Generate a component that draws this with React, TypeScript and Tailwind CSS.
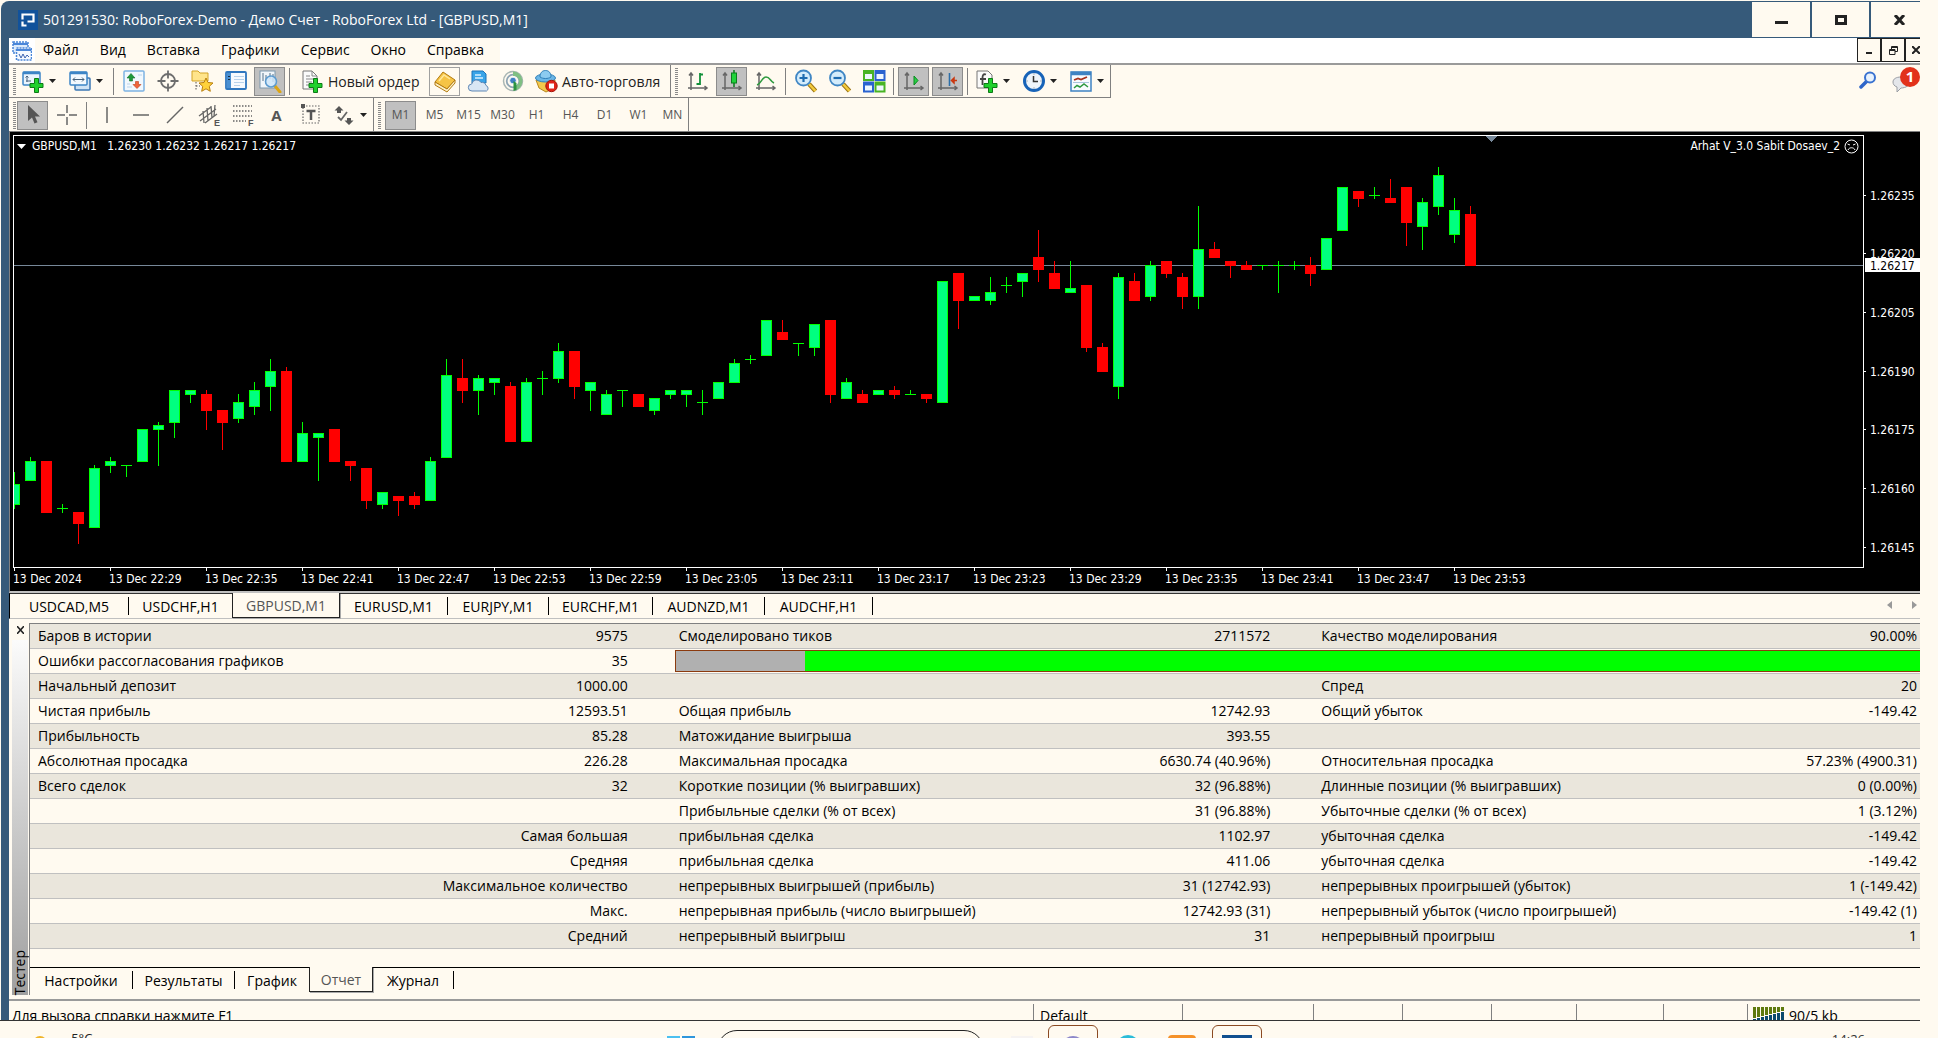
import React from 'react';

type IconProps = { children: React.ReactNode; size?: number };

function Ico({ children, size = 24 }: IconProps) {
  return (
    <svg width={size} height={size} viewBox="0 0 24 24" fill="none" aria-hidden="true" className="block shrink-0">
      {children}
    </svg>
  );
}

/* ---------- toolbar icons ---------- */

const PLUS = 'M13.500 9.500h4v5H22v4h-4.500v5h-4v-5H9v-4h4.500z';

const NewChart = () => (
  <Ico>
    <rect x="2" y="3" width="17" height="13" rx="1" fill="#eaf4fd" stroke="#3d85c6" strokeWidth="1.500" />
    <path d="M2 4h17" stroke="#3d85c6" strokeWidth="2.500" />
    <path d="M6 7v6M4.500 8.500 6 7l1.500 1.500M10 12H5" stroke="#48637c" />
    <path d={PLUS} fill="#1fd02c" stroke="#0d7a16" />
  </Ico>
);
const Profiles = () => (
  <Ico>
    <rect x="7" y="9" width="15" height="12" rx="1" fill="#cfe3f5" stroke="#3d78b4" strokeWidth="1.500" />
    <rect x="2" y="3" width="17" height="13" rx="1" fill="#f3f9fe" stroke="#3d85c6" strokeWidth="1.500" />
    <path d="M2 4h17" stroke="#3d85c6" strokeWidth="2.500" />
    <path d="M5 10.500h11M7 8.500l-2 2 2 2M14 8.500l2 2-2 2" stroke="#48637c" />
  </Ico>
);
const MarketWatch = () => (
  <Ico>
    <rect x="2" y="2" width="20" height="20" rx="1" fill="#f2f8fd" stroke="#7db3e2" strokeWidth="1.500" />
    <path d="M5 18h5M16 6h4M5 15h3" stroke="#b9d3ea" />
    <path d="M9 4.500 13 9h-2.500v3h-3V9H5z" fill="#1f9a3a" stroke="#147028" strokeWidth=".6" />
    <path d="m15 19.500 4-4h-2.500v-3h-3v3H11z" fill="#f0653a" stroke="#c03d17" strokeWidth=".6" />
  </Ico>
);
const Crosshair = () => (
  <Ico>
    <circle cx="12" cy="12" r="7" stroke="#6d6d6d" strokeWidth="1.800" />
    <path d="M12 1.500v8M12 14.500v8M1.500 12h8M14.500 12h8" stroke="#6d6d6d" strokeWidth="1.800" />
  </Ico>
);
const Navigator = () => (
  <Ico>
    <path d="M2 2h6l2 2h8v8H2z" fill="#ffe48a" stroke="#d3a326" />
    <path d="M6 13v9M6 17h4" stroke="#555" strokeDasharray="1.500 1.500" />
    <path d="m16 9 2 4.500 5 .5-3.700 3.300 1 5L16 19.800l-4.300 2.500 1-5L9 14l5-.5z" fill="#ffd23a" stroke="#b9800f" />
  </Ico>
);
const Terminal = () => (
  <Ico>
    <rect x="2" y="3" width="20" height="17" rx="1" fill="#f6fafe" stroke="#2f77bf" strokeWidth="1.800" />
    <rect x="3" y="4" width="4" height="15" fill="#4a90d2" />
    <path d="M10 7.500h10M10 10.500h10M10 13.500h10M10 16.500h6" stroke="#b8d2ea" />
    <path d="M4 7.500h2M4 10.500h2" stroke="#1c2c3c" />
  </Ico>
);
const Tester = () => (
  <Ico>
    <rect x="2" y="2" width="15" height="17" fill="#f1f6fa" stroke="#7d98ad" />
    <path d="M5 4v8M8 6v9M12 4v6M15 5v8" stroke="#54728a" />
    <path d="m17 17 5 6" stroke="#dca514" strokeWidth="3" strokeLinecap="round" />
    <circle cx="13" cy="12.500" r="5.500" fill="#cfe6f9" fillOpacity=".85" stroke="#5c9bd0" strokeWidth="1.500" />
  </Ico>
);
const NewOrder = () => (
  <Ico>
    <path d="M3 2h9l5 5v13H3z" fill="#fbfbfb" stroke="#777" />
    <path d="M12 2v5h5M6 7h4M6 10h8M6 13h6M6 16h4" stroke="#888" />
    <path d={PLUS} fill="#1fd02c" stroke="#0d7a16" />
  </Ico>
);
const MetaEditor = () => (
  <Ico>
    <path d="M2 13 10 3l12 8-8 9z" fill="#f6c445" stroke="#b37b10" />
    <path d="m2 13 12 7 8-9v3l-8 9L2 16z" fill="#fdf0c4" stroke="#b37b10" />
    <path d="m6 12 5-6 6 4" stroke="#ffe79a" strokeWidth="1.500" />
  </Ico>
);
const Cloud = () => (
  <Ico>
    <path d="M5 2h11l3 3v9H5z" fill="#39a4e8" stroke="#1b73b9" />
    <path d="M8 6h6M8 9h8" stroke="#d6efff" strokeWidth="1.500" />
    <path d="M5 22a3.500 3.500 0 0 1-.3-7 5 5 0 0 1 9.300-1.500 4 4 0 0 1 5 3 3 3 0 0 1 .5 5.500z" fill="#d9e6f4" stroke="#5f87b4" />
  </Ico>
);
const Signals = () => (
  <Ico>
    <circle cx="12" cy="12" r="9.500" stroke="#a9b6b4" strokeWidth="1.500" />
    <circle cx="12" cy="12" r="6.300" stroke="#8fa5b5" strokeWidth="1.800" />
    <path d="M12 2.500a9.500 9.500 0 0 1 3 18.500l-1-4a5 5 0 0 0-2-10z" fill="#7fbf83" />
    <circle cx="12" cy="11.500" r="3.300" fill="#3f7fc4" stroke="#fff" strokeWidth=".8" />
    <path d="M12.500 12v10l3-1V14z" fill="#2d9440" />
  </Ico>
);
const AutoTrade = () => (
  <Ico>
    <path d="m2 11 3 8 7 4 8-4 1-8z" fill="#f3c84c" stroke="#b7871c" />
    <ellipse cx="11.500" cy="9" rx="10" ry="4" fill="#6bb6e6" stroke="#2f7fb8" />
    <path d="M6 8c0-4 2-6.500 5.500-6.500S17 4 17 8c-3 2-8 2-11 0z" fill="#8ccbf0" stroke="#2f7fb8" />
    <circle cx="17.500" cy="17" r="5.700" fill="#e02417" stroke="#a5130a" />
    <rect x="15" y="14.500" width="5" height="5" fill="#fff" />
  </Ico>
);

const Axes = () => (
  <path d="M5 4v17M3 6.500 5 4l2 2.500M2 19h19M18.500 17l2.500 2-2.500 2" stroke="#666" strokeWidth="1.500" />
);

const BarChart = () => (
  <Ico>
    <Axes />
    <path d="M14 4v12M14 5.500h3M10.500 15H14" stroke="#11903a" strokeWidth="1.800" />
  </Ico>
);
const CandleChart = () => (
  <Ico>
    <Axes />
    <path d="M14 1v17" stroke="#0a7d1d" strokeWidth="1.500" />
    <rect x="11.500" y="4" width="5" height="10" fill="#1fd33a" stroke="#0a7d1d" />
  </Ico>
);
const LineChart = () => (
  <Ico>
    <Axes />
    <path d="M3 16c4-1 5-8 9-8s4 4 8 6" stroke="#2e9a3f" strokeWidth="1.600" />
  </Ico>
);
const Zoom = ({ plus }: { plus?: boolean }) => (
  <Ico>
    <path d="m15 15 6.500 7" stroke="#9c7413" strokeWidth="4.500" />
    <path d="m15 15 6.500 7" stroke="#f4cc3e" strokeWidth="2.500" />
    <circle cx="9.500" cy="9" r="7.500" fill="#d4ecfb" stroke="#3f86c4" strokeWidth="1.800" />
    <path d={plus ? 'M5.500 9h8M9.500 5v8' : 'M5.500 9h8'} stroke="#1e6cb0" strokeWidth="2.200" />
  </Ico>
);
const Tile = () => (
  <Ico>
    <rect x="1" y="1" width="11" height="11" fill="#49b424" />
    <rect x="12.500" y="1" width="11" height="11" fill="#2a62cf" />
    <rect x="1" y="12.500" width="11" height="11" fill="#2a62cf" />
    <rect x="12.500" y="12.500" width="11" height="11" fill="#49b424" />
    <path d="M3 5h7v5H3zM14.500 5h7v5h-7zM3 16.500h7v5H3zM14.500 16.500h7v5h-7z" fill="#eef7ff" />
  </Ico>
);
const AutoScroll = () => (
  <Ico>
    <Axes />
    <path d="M12 7v9l4-4.500z" fill="#29d045" stroke="#0a8a20" />
  </Ico>
);
const ChartShift = () => (
  <Ico>
    <Axes />
    <path d="M13.500 4v13" stroke="#2c6ea8" strokeWidth="1.600" />
    <path d="M21 11.500h-3M18 9l-2.500 2.500L18 14z" fill="#e2431d" stroke="#c8370f" strokeWidth="1.500" />
  </Ico>
);
const Indicators = () => (
  <Ico>
    <path d="M2 2h11l4 4v13H2z" fill="#fafafa" stroke="#777" />
    <path d="M11 5.500c-3-1-3.500 1-3.500 3.500v7M5 10h6" stroke="#444" strokeWidth="1.800" />
    <path d={PLUS} fill="#1fd02c" stroke="#0d7a16" />
  </Ico>
);
const Clock = () => (
  <Ico>
    <circle cx="12" cy="12" r="9.500" fill="#eef4fa" stroke="#1763b8" strokeWidth="3" />
    <path d="M11.500 7v5.500H16" stroke="#333" strokeWidth="1.500" />
    <path d="M12 4.500v1M12 18.500v1M4.500 12h1M18.500 12h1" stroke="#678" />
  </Ico>
);
const Template = () => (
  <Ico>
    <rect x="2" y="3" width="20" height="19" fill="#f8fbfe" stroke="#3f83c2" strokeWidth="1.500" />
    <path d="M2 4.500h20" stroke="#3f83c2" strokeWidth="3.500" />
    <path d="m5 11 4-1.500 3 1 6-2.500" stroke="#a8321c" strokeWidth="1.800" />
    <path d="M4 13.500h16" stroke="#a9c4dc" />
    <path d="m5 19 3-2.500 3 1.500 4-3 4 3" stroke="#2e9a3f" strokeWidth="1.500" />
  </Ico>
);

/* ---------- drawing tools ---------- */

const Cursor = () => (
  <Ico>
    <path d="M7 2v16l4-3.500 2.500 6 3-1.300-2.500-5.700h5z" fill="#555" />
  </Ico>
);
const Cross = () => (
  <Ico>
    <path d="M12 2v8M12 14v8M2 12h8M14 12h8" stroke="#666" strokeWidth="1.500" />
  </Ico>
);
const VLine = () => (
  <Ico>
    <path d="M12 4v16" stroke="#666" strokeWidth="1.500" />
  </Ico>
);
const HLine = () => (
  <Ico>
    <path d="M4 12h16" stroke="#666" strokeWidth="1.500" />
  </Ico>
);
const Trend = () => (
  <Ico>
    <path d="M4 20 20 4" stroke="#666" strokeWidth="1.500" />
  </Ico>
);
const Letter = ({ children }: { children: string }) => (
  <text x="17" y="23" fill="#555" fontSize="9" fontWeight="700" fontFamily="Liberation Sans, sans-serif">
    {children}
  </text>
);
const Channel = () => (
  <Ico>
    <path d="m2 13 12-9M3 18 19 6M8 20l12-9M6 8l1 12M10 5l1 13M14 3l1 12M18 2l-1 11" stroke="#666" strokeWidth="1.300" />
    <Letter>E</Letter>
  </Ico>
);
const Fibo = () => (
  <Ico>
    <path d="M2 3h19M2 8h19M2 13h19M2 18h13" stroke="#666" strokeWidth="1.500" strokeDasharray="1.500 1.500" />
    <Letter>F</Letter>
  </Ico>
);
const TextLabel = () => (
  <Ico>
    <rect x="4" y="3" width="16" height="17" stroke="#666" strokeWidth="1.200" strokeDasharray="1.500 1.500" />
    <path d="M2 1h4v4H2z" fill="#555" />
    <path d="M7.500 8h9M12 8v9" stroke="#555" strokeWidth="2.500" />
  </Ico>
);
const Arrows = () => (
  <Ico>
    <path d="m7 3 4.500 4.500H9V10H5V7.500H2.500zM17 22l4.500-4.500H19V15h-4v2.500h-2.500z" fill="#555" />
    <path d="m6 14 3 3 6-8" stroke="#666" strokeWidth="1.800" />
  </Ico>
);

/* ---------- toolbar pieces ---------- */

const Caret = () => (
  <svg width="7" height="4" viewBox="0 0 7 4" aria-hidden="true">
    <path d="M0 0h7L3.500 4z" fill="#222" />
  </svg>
);
const Grip = () => <div className="mx-1 h-[27px] w-[3px] shrink-0 bg-[repeating-linear-gradient(#8a8a8a_0_1px,transparent_1px_2px)]" />;
const Sep = () => <div className="mx-px h-[27px] w-px shrink-0 bg-[#808080]" />;

function Btn({ label, pressed, children }: { label: string; pressed?: boolean; children: React.ReactNode }) {
  return (
    <button
      type="button"
      aria-label={label}
      aria-pressed={pressed}
      className={
        'flex h-[29px] w-[31px] shrink-0 items-center justify-center ' +
        (pressed ? 'border border-[#8c8c8c] bg-[#c0c0c0]' : '')
      }
    >
      {children}
    </button>
  );
}
function Drop({ label, children }: { label: string; children: React.ReactNode }) {
  return (
    <button type="button" aria-label={label} className="flex h-[29px] w-11 shrink-0 items-center gap-1 pl-[3px]">
      {children}
      <Caret />
    </button>
  );
}

const periods = ['M1', 'M5', 'M15', 'M30', 'H1', 'H4', 'D1', 'W1', 'MN'];
const menus = ['Файл', 'Вид', 'Вставка', 'Графики', 'Сервис', 'Окно', 'Справка'];

function TitleBar() {
  return (
    <header className="flex h-[37px] items-stretch rounded-tl-lg bg-[#365a7a] pl-[17px] text-white">
      <div className="flex flex-1 items-center gap-[5px]">
        <svg width="20" height="20" viewBox="0 0 20 20" aria-hidden="true">
          <rect width="20" height="20" fill="#11529b" />
          <path d="M4.500 9.500v-5h11v7h-6M4.500 11.500v4h4" stroke="#fff" strokeWidth="2.200" fill="none" />
        </svg>
        <h1 className="text-[14px] leading-5">501291530: RoboForex-Demo - Демо Счет - RoboForex Ltd - [GBPUSD,M1]</h1>
      </div>
      <div className="flex gap-[2px] py-px text-[#1a1a1a]">
        <button type="button" aria-label="Свернуть" className="flex w-[58px] items-center justify-center bg-[#fffaf0]">
          <span className="mt-[5px] h-[3px] w-[13px] bg-[#222]" />
        </button>
        <button type="button" aria-label="Развернуть" className="flex w-[57px] items-center justify-center bg-[#fffaf0]">
          <span className="h-[10px] w-3 border-[3px] border-[#222]" />
        </button>
        <button type="button" aria-label="Закрыть" className="flex w-[49px] items-center justify-center bg-[#fffaf0] pl-2">
          <svg width="12" height="10" viewBox="0 0 12 10" aria-hidden="true">
            <path d="m1 0 9 10M10 0 1 10" stroke="#222" strokeWidth="3" />
          </svg>
        </button>
      </div>
    </header>
  );
}

function MenuBar() {
  return (
    <div className="flex h-[27px] border-b-2 border-[#9a9a9a] bg-white">
      <div className="flex w-[491px] items-center bg-[#fffaf0]">
        <span className="flex h-full w-[26px] items-center justify-center bg-white">
          <svg width="20" height="20" viewBox="0 0 20 20" aria-hidden="true">
            <rect x="1" y="1" width="15" height="11" fill="#dcebfb" stroke="#4a86d8" strokeWidth="1.500" strokeDasharray="2 1" />
            <rect x="4.500" y="7" width="15" height="12" fill="#f4f9ff" stroke="#4a86d8" strokeWidth="1.500" strokeDasharray="2 1" />
            <path d="M1 3h15M4.500 9h15" stroke="#4a86d8" strokeWidth="2" />
            <path d="m7 13 2 4 2-4 2 4 2-3 2 2" stroke="#3a62b0" fill="none" />
          </svg>
        </span>
        <nav className="flex gap-[21px] pb-px pl-2 text-[14px] leading-6 text-black">
          {menus.map((m) => (
            <button type="button" key={m}>
              {m}
            </button>
          ))}
        </nav>
      </div>
      <div className="ml-auto flex pb-px">
        <button type="button" aria-label="Свернуть окно" className="flex w-6 justify-center border border-[#222] bg-[#fffaf0]">
          <span className="mt-[13px] h-[2px] w-[6px] bg-[#222]" />
        </button>
        <button type="button" aria-label="Восстановить окно" className="flex w-6 items-center justify-center border border-[#222] bg-[#fffaf0]">
          <svg width="9" height="9" viewBox="0 0 9 9" aria-hidden="true">
            <path d="M2.500 3V.5h6v5H6M2 1.500h7M.5 3.500H6v5H.5zM0 4.500h6" stroke="#222" fill="none" />
          </svg>
        </button>
        <button type="button" aria-label="Закрыть окно" className="flex w-[15px] items-center justify-end overflow-hidden border-y border-l border-[#222] bg-[#fffaf0]">
          <svg width="8" height="8" viewBox="0 0 8 8" aria-hidden="true">
            <path d="m0 0 8 8M8 0 0 8" stroke="#222" strokeWidth="2" />
          </svg>
        </button>
      </div>
    </div>
  );
}

function MainToolbar() {
  return (
    <div className="flex justify-between">
      <div className="flex h-[33px]">
        <div className="flex items-center gap-[3px] border-r border-b border-[#808080]">
          <Grip />
          <div className="-ml-[5px] flex items-center gap-[3px]">
            <Drop label="Новый график"><NewChart /></Drop>
            <Drop label="Профили"><Profiles /></Drop>
            <Sep />
            <Btn label="Обзор рынка"><MarketWatch /></Btn>
            <Btn label="Окно данных"><Crosshair /></Btn>
            <Btn label="Навигатор"><Navigator /></Btn>
            <Btn label="Терминал"><Terminal /></Btn>
            <Btn label="Тестер стратегий" pressed><Tester /></Btn>
            <Sep />
            <button type="button" className="flex h-[29px] w-[132px] items-center gap-1 pl-[6px] text-[14px] whitespace-nowrap text-[#222]">
              <NewOrder />
              Новый ордер
            </button>
            <button type="button" aria-label="MetaEditor" className="flex h-[29px] w-[31px] items-center justify-center border border-[#a0a0a0]">
              <MetaEditor />
            </button>
            <Btn label="Облако"><Cloud /></Btn>
            <Btn label="Сигналы"><Signals /></Btn>
            <button type="button" className="flex h-[29px] w-[139px] items-center gap-1 pl-[3px] text-[14px] whitespace-nowrap text-[#222]">
              <AutoTrade />
              Авто-торговля
            </button>
          </div>
        </div>
        <div className="flex items-center gap-[3px] border-r border-b border-[#808080]">
          <Grip />
          <div className="-ml-[3px] flex items-center gap-[3px]">
            <Btn label="Бары"><BarChart /></Btn>
            <Btn label="Свечи" pressed><CandleChart /></Btn>
            <Btn label="Линия"><LineChart /></Btn>
            <Sep />
            <Btn label="Увеличить"><Zoom plus /></Btn>
            <Btn label="Уменьшить"><Zoom /></Btn>
            <Btn label="Окна мозаикой"><Tile /></Btn>
            <Sep />
            <Btn label="Автопрокрутка" pressed><AutoScroll /></Btn>
            <Btn label="Сдвиг графика" pressed><ChartShift /></Btn>
            <Sep />
            <Drop label="Индикаторы"><Indicators /></Drop>
            <Drop label="Периоды"><Clock /></Drop>
            <Drop label="Шаблоны"><Template /></Drop>
          </div>
        </div>
      </div>
      <div className="flex items-start gap-[15px] pt-[2px]">
        <button type="button" aria-label="Поиск" className="mt-1">
          <svg width="18" height="18" viewBox="0 0 18 18" fill="none" aria-hidden="true">
            <path d="m8 10-6 6" stroke="#2f66c9" strokeWidth="3.500" strokeLinecap="round" />
            <circle cx="11" cy="6.500" r="5" fill="#e8f2fd" stroke="#3a72d0" strokeWidth="2" />
          </svg>
        </button>
        <button type="button" aria-label="Уведомления: 1">
          <svg width="28" height="26" viewBox="0 0 28 26" aria-hidden="true">
            <path d="M1 15c0-3 3-5 8-5s9 2 9 5-4 6-9 6l-4 4v-5c-3-1-4-3-4-5z" fill="#e4e6ea" stroke="#9a9da3" />
            <circle cx="18" cy="10" r="10" fill="#e2321b" />
            <text x="18" y="15" textAnchor="middle" fill="#fff" fontSize="15" fontWeight="700" fontFamily="Open Sans, sans-serif">
              1
            </text>
          </svg>
        </button>
      </div>
    </div>
  );
}

function DrawToolbar() {
  return (
    <div className="flex h-[34px] border-b border-[#808080]">
      <div className="flex items-center gap-[3px] border-r border-[#808080] pt-px">
        <Grip />
        <div className="-ml-[6px] flex items-center gap-[3px]">
          <Btn label="Курсор" pressed><Cursor /></Btn>
          <Btn label="Перекрестие"><Cross /></Btn>
          <Sep />
          <Btn label="Вертикальная линия"><VLine /></Btn>
          <Btn label="Горизонтальная линия"><HLine /></Btn>
          <Btn label="Трендовая линия"><Trend /></Btn>
          <Btn label="Канал"><Channel /></Btn>
          <Btn label="Фибоначчи"><Fibo /></Btn>
          <Btn label="Текст"><span className="text-[15px] font-bold text-[#555]">A</span></Btn>
          <Btn label="Метка"><TextLabel /></Btn>
          <Drop label="Стрелки"><Arrows /></Drop>
        </div>
      </div>
      <div className="flex items-center gap-[3px] border-r border-[#808080] pt-px">
        <Grip />
        <div className="-ml-[3px] flex items-center gap-[3px] text-[12px] text-[#555]">
          {periods.map((p, i) => (
            <Btn key={p} label={p} pressed={i === 0}>
              {p}
            </Btn>
          ))}
        </div>
      </div>
    </div>
  );
}

/* ---------- chart ---------- */

/* open, high, low, close: last three digits of the 1.26xxx quote */
const candles: [number, number, number, number][] = [
  [156, 164, 155, 161], [162, 168, 162, 167], [167, 167, 154, 154], [155, 156, 154, 155],
  [154, 154, 146, 151], [150, 166, 150, 165], [166, 168, 164, 167], [166, 166, 163, 166],
  [167, 175, 167, 175], [175, 177, 166, 176], [177, 185, 173, 185], [184, 185, 182, 185],
  [184, 185, 175, 180], [180, 180, 170, 177], [178, 184, 177, 182], [181, 187, 179, 185],
  [186, 193, 180, 190], [190, 191, 167, 167], [167, 177, 167, 174], [173, 174, 162, 174],
  [175, 175, 167, 167], [167, 167, 162, 166], [165, 165, 155, 157], [156, 159, 155, 159],
  [158, 158, 153, 157], [158, 159, 155, 156], [157, 168, 157, 167], [168, 193, 168, 189],
  [188, 193, 182, 185], [185, 189, 179, 188], [187, 188, 184, 188], [186, 187, 172, 172],
  [172, 188, 172, 187], [188, 190, 184, 188], [188, 197, 187, 195], [195, 195, 183, 186],
  [185, 187, 180, 187], [179, 185, 179, 184], [185, 185, 181, 185], [184, 184, 181, 181],
  [180, 183, 179, 183], [184, 185, 183, 185], [184, 185, 181, 185], [182, 185, 179, 182],
  [183, 187, 183, 187], [187, 193, 187, 192], [193, 194, 192, 193], [194, 203, 194, 203],
  [200, 203, 198, 198], [197, 197, 194, 197], [196, 202, 194, 202], [203, 203, 182, 184],
  [183, 188, 183, 187], [184, 185, 182, 182], [184, 185, 184, 185], [185, 186, 183, 184],
  [184, 185, 184, 184], [184, 184, 182, 183], [182, 213, 182, 213], [215, 215, 201, 208],
  [208, 209, 208, 209], [208, 214, 207, 210], [212, 214, 210, 212], [213, 215, 209, 215],
  [219, 226, 213, 216], [215, 218, 211, 211], [210, 218, 210, 211], [212, 212, 195, 196],
  [196, 197, 190, 190], [186, 215, 183, 214], [213, 215, 208, 208], [209, 218, 208, 217],
  [218, 218, 214, 215], [214, 215, 206, 209], [209, 232, 206, 221], [221, 223, 219, 219],
  [218, 218, 214, 217], [217, 218, 216, 216], [217, 217, 216, 217], [217, 218, 210, 217],
  [217, 218, 216, 217], [217, 219, 212, 215], [216, 224, 216, 224], [226, 237, 226, 237],
  [236, 236, 232, 234], [235, 237, 234, 235], [234, 239, 233, 233], [237, 237, 222, 228],
  [227, 234, 221, 233], [232, 242, 230, 240], [225, 234, 223, 231], [230, 232, 217, 217],
];
const STEP = 16;
const priceY = (p: number) => Math.round(129 + (217 - p) * 3.913);

const times = [
  '13 Dec 2024', '13 Dec 22:29', '13 Dec 22:35', '13 Dec 22:41', '13 Dec 22:47', '13 Dec 22:53',
  '13 Dec 22:59', '13 Dec 23:05', '13 Dec 23:11', '13 Dec 23:17', '13 Dec 23:23', '13 Dec 23:29',
  '13 Dec 23:35', '13 Dec 23:41', '13 Dec 23:47', '13 Dec 23:53',
];
const prices = [235, 220, 205, 190, 175, 160, 145];

function Candle({ x, c }: { x: number; c: [number, number, number, number] }) {
  const [open, high, low, close] = c;
  const up = close >= open;
  const top = priceY(Math.max(open, close));
  const bottom = priceY(Math.min(open, close));
  const line = up ? '#00ff00' : '#ff0000';
  return (
    <g>
      <rect x={x} y={priceY(high)} width={1} height={priceY(low) - priceY(high) + 1} fill={line} />
      <rect x={x - 5} y={top} width={11} height={bottom - top + 1} fill={line} />
      {up && bottom - top > 1 && <rect x={x - 4} y={top + 1} width={9} height={bottom - top - 1} fill="#00ff7f" />}
    </g>
  );
}

const CHART_FONT = "font-['DejaVu_Sans_Condensed','Noto_Sans',sans-serif]";

function Chart() {
  return (
    <section className={'border-b-2 border-l border-[#c0c0c0] border-l-[#808080] bg-black text-[12px] text-white ' + CHART_FONT}>
      <div className="flex pt-[3px] pl-[3px]">
        <div className="relative min-w-0 flex-1 border border-white">
          <svg className="block h-[431px] w-full" shapeRendering="crispEdges" role="img" aria-label="GBPUSD,M1">
            <rect x="0" y="129" width="100%" height="1" fill="#778899" />
            <path d="M1471 0h12l-6 6z" fill="#778899" />
            {candles.map((c, i) => (
              <Candle key={i} x={i * STEP} c={c} />
            ))}
          </svg>
          <div className="absolute inset-x-0 top-0 flex items-center justify-between pt-[2px] pr-1 pl-[3px] leading-4">
            <span className="flex items-center gap-[6px] whitespace-pre">
              <svg width="9" height="5" viewBox="0 0 9 5" aria-hidden="true">
                <path d="M0 0h9L4.500 5z" fill="#fff" />
              </svg>
              {'GBPUSD,M1   1.26230 1.26232 1.26217 1.26217'}
            </span>
            <span className="flex items-center gap-1">
              Arhat V_3.0 Sabit Dosaev_2
              <svg width="15" height="15" viewBox="0 0 15 15" fill="none" stroke="#fff" aria-hidden="true">
                <circle cx="7.500" cy="7.500" r="6.500" />
                <path d="M4 11c1-3 6-3 7 0M3.500 5l2.500 1M11.500 5 9 6" />
              </svg>
            </span>
          </div>
        </div>
        <svg className="block h-[433px] w-14 shrink-0" role="img" aria-label="Шкала цен">
          {prices.map((p) => (
            <g key={p}>
              <rect x="0" y={priceY(p) + 1} width="2" height="1" fill="#fff" />
              <text x="6" y={priceY(p) + 6} fill="#fff">{`1.26${p}`}</text>
            </g>
          ))}
          <rect x="1" y="123" width="55" height="14" fill="#fff" />
          <text x="6" y="135" fill="#000">1.26217</text>
        </svg>
      </div>
      <div className="flex h-[23px] overflow-hidden pl-[3px]">
        {times.map((t) => (
          <div key={t} className="w-24 shrink-0 whitespace-nowrap">
            <div className="ml-px h-[3px] w-px bg-white" />
            <div className="leading-4">{t}</div>
          </div>
        ))}
      </div>
    </section>
  );
}

/* ---------- tabs ---------- */

type Tab = { t: string; w: string; on?: boolean };
const chartTabs: Tab[] = [
  { t: 'USDCAD,M5', w: 'w-[119px]' },
  { t: 'USDCHF,H1', w: 'w-[103px]' },
  { t: 'GBPUSD,M1', w: 'w-[108px]', on: true },
  { t: 'EURUSD,M1', w: 'w-[108px]' },
  { t: 'EURJPY,M1', w: 'w-[101px]' },
  { t: 'EURCHF,M1', w: 'w-[104px]' },
  { t: 'AUDNZD,M1', w: 'w-[112px]' },
  { t: 'AUDCHF,H1', w: 'w-[108px]' },
];
const testerTabs: Tab[] = [
  { t: 'Настройки', w: 'w-[103px]' },
  { t: 'Результаты', w: 'w-[102px]' },
  { t: 'График', w: 'w-[74px]' },
  { t: 'Отчет', w: 'w-[64px]', on: true },
  { t: 'Журнал', w: 'w-[81px]' },
];

function Tabs({ tabs, label }: { tabs: Tab[]; label: string }) {
  return (
    <div role="tablist" aria-label={label} className="flex h-6 text-[14px] text-black">
      {tabs.map((tab, i) => {
        const next = tabs[i + 1];
        return (
          <button
            key={tab.t}
            type="button"
            role="tab"
            aria-selected={!!tab.on}
            className={
              'flex shrink-0 items-center justify-center whitespace-nowrap ' +
              tab.w +
              (tab.on
                ? ' relative -mt-px h-[25px] border-x border-b border-[#222] bg-[#fffaf0] text-[#555] shadow-[1px_1px_0_#a9a9a9]'
                : '')
            }
          >
            <span className="flex-1">{tab.t}</span>
            {!tab.on && !(next && next.on) && <span className="h-[18px] w-px bg-black" />}
          </button>
        );
      })}
    </div>
  );
}

/* ---------- report ---------- */

const rows: string[][] = [
  ['Баров в истории', '9575', 'Смоделировано тиков', '2711572', 'Качество моделирования', '90.00%'],
  ['Ошибки рассогласования графиков', '35'],
  ['Начальный депозит', '1000.00', '', '', 'Спред', '20'],
  ['Чистая прибыль', '12593.51', 'Общая прибыль', '12742.93', 'Общий убыток', '-149.42'],
  ['Прибыльность', '85.28', 'Матожидание выигрыша', '393.55', '', ''],
  ['Абсолютная просадка', '226.28', 'Максимальная просадка', '6630.74 (40.96%)', 'Относительная просадка', '57.23% (4900.31)'],
  ['Всего сделок', '32', 'Короткие позиции (% выигравших)', '32 (96.88%)', 'Длинные позиции (% выигравших)', '0 (0.00%)'],
  ['', '', 'Прибыльные сделки (% от всех)', '31 (96.88%)', 'Убыточные сделки (% от всех)', '1 (3.12%)'],
  ['', 'Самая большая', 'прибыльная сделка', '1102.97', 'убыточная сделка', '-149.42'],
  ['', 'Средняя', 'прибыльная сделка', '411.06', 'убыточная сделка', '-149.42'],
  ['', 'Максимальное количество', 'непрерывных выигрышей (прибыль)', '31 (12742.93)', 'непрерывных проигрышей (убыток)', '1 (-149.42)'],
  ['', 'Макс.', 'непрерывная прибыль (число выигрышей)', '12742.93 (31)', 'непрерывный убыток (число проигрышей)', '-149.42 (1)'],
  ['', 'Средний', 'непрерывный выигрыш', '31', 'непрерывный проигрыш', '1'],
];

function Report() {
  return (
    <table className="w-full table-fixed border-separate border-spacing-0 text-[14px] leading-5 text-black">
      <colgroup>
        <col className="w-[19%]" />
        <col className="w-[14.9%]" />
        <col className="w-[19%]" />
        <col className="w-[15%]" />
        <col className="w-[19%]" />
        <col className="w-[13.1%]" />
      </colgroup>
      <tbody>
        {rows.map((r, i) => (
          <tr key={i} className="h-[25px] odd:bg-[#eae6dc]">
            {r.map((cell, j) => (
              <td
                key={j}
                className={
                  'border-b border-[#c0c0c0] py-0 whitespace-nowrap ' +
                  (j % 2 === 0 ? 'pl-2 text-left' : j === 5 ? 'pr-[3px] text-right' : 'pr-[43px] text-right')
                }
              >
                {cell}
              </td>
            ))}
            {r.length === 2 && (
              <td colSpan={4} className="border-b border-[#c0c0c0] py-0 pl-1">
                <div className="flex h-[22px] border border-r-0 border-[#8b3a0e] bg-[#00ff00]" role="img" aria-label="Качество моделирования">
                  <div className="w-[129px] bg-[#b0b0b0]" />
                </div>
              </td>
            )}
          </tr>
        ))}
      </tbody>
    </table>
  );
}

function TesterPanel() {
  return (
    <section className="flex h-[376px]">
      <div className="flex w-5 flex-col items-center pr-px pl-[3px]">
        <button type="button" aria-label="Закрыть тестер" className="flex h-[17px] w-full items-start justify-center pt-[3px]">
          <svg width="7" height="8" viewBox="0 0 7 8" aria-hidden="true">
            <path d="m0 0 7 8M7 0 0 8" stroke="#222" strokeWidth="1.500" />
          </svg>
        </button>
        <div className="mb-1 flex w-full flex-1 flex-col items-center justify-end bg-linear-to-b from-[#fbfbfb] to-[#a0a0a0]">
          <span className="rotate-180 py-1 text-[14px] leading-4 [writing-mode:vertical-rl]">Тестер</span>
        </div>
      </div>
      <div className="min-w-0 flex-1">
        <div className="h-full border-t border-[#808080]">
          <div className="h-[371px] border-l border-[#808080]">
            <Report />
            <div className="mt-[18px] border-t border-black">
              <Tabs tabs={testerTabs} label="Тестер" />
            </div>
          </div>
        </div>
      </div>
    </section>
  );
}

function StatusBar() {
  return (
    <footer className="flex h-[21px] overflow-hidden border-t-2 border-[#9a9a9a] pt-[3px] text-[14px] leading-6 text-black">
      <div className="flex-1 pl-[3px] whitespace-nowrap">Для вызова справки нажмите F1</div>
      <div className="w-[149px] border-l border-[#808080] pl-[6px]">Default</div>
      <div className="w-[131px] border-l border-[#808080]" />
      <div className="w-[89px] border-l border-[#808080]" />
      <div className="w-[89px] border-l border-[#808080]" />
      <div className="w-[85px] border-l border-[#808080]" />
      <div className="w-[87px] border-l border-[#808080]" />
      <div className="w-[84px] border-l border-[#808080]" />
      <div className="flex w-[173px] gap-1 border-l border-[#808080] pl-[5px]">
        <svg width="32" height="16" viewBox="0 0 32 16" className="mt-[3px]" shapeRendering="crispEdges" aria-hidden="true">
          {[0, 1, 2, 3, 4, 5, 6, 7].map((i) => (
            <g key={i}>
              <rect x={i * 4} y="0" width="3" height={11 - i} fill="#5f7a0e" />
              <rect x={i * 4} y={12 - i} width="3" height={8 + i} fill="#0c4a6e" />
            </g>
          ))}
        </svg>
        90/5 kb
      </div>
    </footer>
  );
}

function Taskbar() {
  return (
    <div className="flex h-[18px] justify-between overflow-hidden border-t border-[#333] pr-[55px] pl-[33px]">
      <div className="flex w-[300px] items-start">
        <span className="mt-[15px] h-4 w-[14px] rounded-t-full bg-[#f0b429]" />
        <span className="mt-[9px] ml-5 text-[13px] leading-4 text-[#222]">-5°C</span>
      </div>
      <div className="flex items-start pl-[30px]">
        <svg width="28" height="28" viewBox="0 0 28 28" className="mt-[15px]" aria-hidden="true">
          <path d="M0 0h13v13H0z" fill="#4cc0f0" />
          <path d="M15 0h13v13H15z" fill="#2f96dc" />
        </svg>
        <div className="mt-[9px] ml-[22px] h-10 w-[267px] shrink-0 rounded-full border border-[#222]" />
        <div className="mt-[15px] ml-[27px] h-6 w-[22px] bg-[#f6f3f2]" />
        <div className="mt-1 ml-[15px] flex h-12 w-[50px] justify-center rounded-md border border-[#8b4a22] pt-[10px]">
          <span className="h-6 w-6 rounded-full bg-[#8d87c9]" />
        </div>
        <div className="mt-[14px] ml-[18px] h-6 w-6 rounded-full bg-[#2bbcd8]" />
        <div className="mt-[14px] ml-[28px] h-6 w-7 rounded-t bg-[#f5922a]" />
        <div className="mt-1 ml-4 flex h-12 w-[50px] justify-center rounded-md border border-[#8b4a22] pt-[9px]">
          <span className="h-6 w-[30px] bg-[#11508f]" />
        </div>
      </div>
      <div className="mt-[10px] w-[300px] text-right text-[13px] leading-4 text-[#333]">14:26</div>
    </div>
  );
}

export default function App() {
  return (
    <div className="min-h-screen overflow-hidden bg-[#fffaf0] pt-px pr-[18px] font-['Open_Sans','Noto_Sans',sans-serif]">
      <div className="pl-px">
        <TitleBar />
        <div className="border-l-8 border-[#365a7a]">
          <MenuBar />
          <MainToolbar />
          <DrawToolbar />
          <Chart />
          <div className="mb-1 border-t border-b border-l border-t-[#333] border-b-[#c0c0c0] border-l-black">
            <div className="flex items-start justify-between">
              <Tabs tabs={chartTabs} label="Графики" />
              <div className="flex gap-5 pt-[7px] pr-[3px]">
                <button type="button" aria-label="Назад">
                  <svg width="5" height="8" viewBox="0 0 5 8" aria-hidden="true">
                    <path d="M5 0v8L0 4z" fill="#999" />
                  </svg>
                </button>
                <button type="button" aria-label="Вперед">
                  <svg width="5" height="8" viewBox="0 0 5 8" aria-hidden="true">
                    <path d="M0 0v8l5-4z" fill="#999" />
                  </svg>
                </button>
              </div>
            </div>
          </div>
          <TesterPanel />
          <StatusBar />
        </div>
      </div>
      <Taskbar />
    </div>
  );
}
